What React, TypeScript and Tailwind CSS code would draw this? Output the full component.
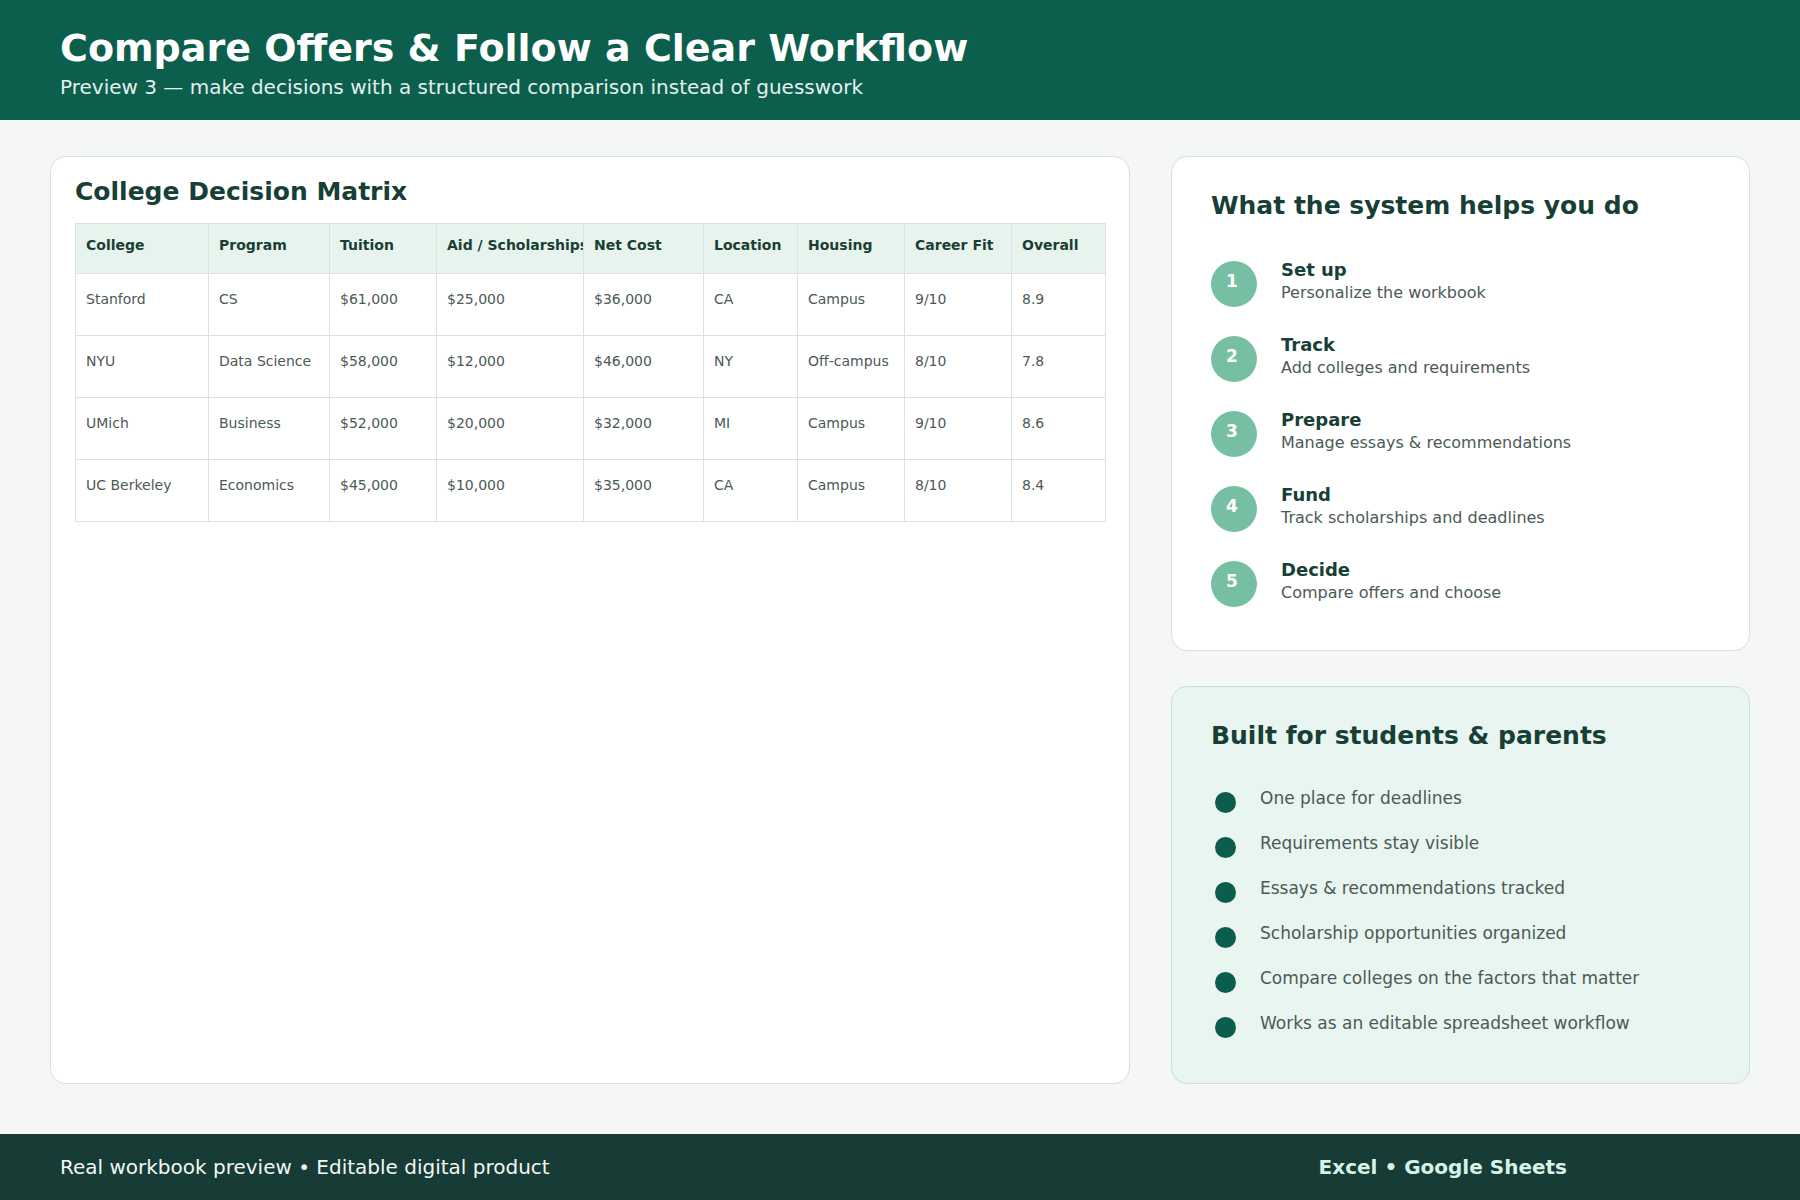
import React from 'react';

const columns = [
  { label: 'College', width: 133 },
  { label: 'Program', width: 121 },
  { label: 'Tuition', width: 107 },
  { label: 'Aid / Scholarships', width: 147 },
  { label: 'Net Cost', width: 120 },
  { label: 'Location', width: 94 },
  { label: 'Housing', width: 107 },
  { label: 'Career Fit', width: 107 },
  { label: 'Overall', width: 94 },
];

const rows = [
  ['Stanford', 'CS', '$61,000', '$25,000', '$36,000', 'CA', 'Campus', '9/10', '8.9'],
  ['NYU', 'Data Science', '$58,000', '$12,000', '$46,000', 'NY', 'Off-campus', '8/10', '7.8'],
  ['UMich', 'Business', '$52,000', '$20,000', '$32,000', 'MI', 'Campus', '9/10', '8.6'],
  ['UC Berkeley', 'Economics', '$45,000', '$10,000', '$35,000', 'CA', 'Campus', '8/10', '8.4'],
];

const steps = [
  { title: 'Set up', text: 'Personalize the workbook' },
  { title: 'Track', text: 'Add colleges and requirements' },
  { title: 'Prepare', text: 'Manage essays & recommendations' },
  { title: 'Fund', text: 'Track scholarships and deadlines' },
  { title: 'Decide', text: 'Compare offers and choose' },
];

const perks = [
  'One place for deadlines',
  'Requirements stay visible',
  'Essays & recommendations tracked',
  'Scholarship opportunities organized',
  'Compare colleges on the factors that matter',
  'Works as an editable spreadsheet workflow',
];

const DecisionMatrix: React.FC = () => (
  <div className="rounded-[16px] border border-[#d6e0dc] bg-white px-[24px] pt-[20px]">
    <h2 className="text-[25px] leading-[30px] font-bold text-[#173f35]">College Decision Matrix</h2>
    {/* header cells clip long labels, like the sheet export does */}
    <table className="mt-[16px] w-[1030px] table-fixed border-collapse">
      <colgroup>
        {columns.map((col) => (
          <col key={col.label} style={{ width: col.width }} />
        ))}
      </colgroup>
      <thead>
        <tr className="h-[50px] bg-[#e7f4ee]">
          {columns.map((col) => (
            <th
              key={col.label}
              className="overflow-hidden whitespace-nowrap border border-[#d9e3e0] px-[10px] pt-[11px] align-top text-left text-[14px] leading-[20px] font-bold text-[#1c3d33]"
            >
              {col.label}
            </th>
          ))}
        </tr>
      </thead>
      <tbody>
        {rows.map((row) => (
          <tr key={row[0]} className="h-[62px]">
            {row.map((cell, i) => (
              <td
                key={i}
                className="whitespace-nowrap border border-[#d9e3e0] px-[10px] pt-[15px] align-top text-[14px] leading-[20px] text-[#4b5a55]"
              >
                {cell}
              </td>
            ))}
          </tr>
        ))}
      </tbody>
    </table>
  </div>
);

const Workflow: React.FC = () => (
  <div className="rounded-[16px] border border-[#d6e0dc] bg-white px-[39px] pt-[34px] pb-[43px]">
    <h2 className="text-[25px] leading-[30px] font-bold text-[#173f35]">What the system helps you do</h2>
    <ol className="mt-[40px] flex flex-col gap-[29px]">
      {steps.map((step, i) => (
        <li key={step.title} className="flex items-start gap-[24px]">
          <span className="flex h-[46px] w-[46px] shrink-0 items-center justify-center rounded-full bg-[#77bfa3] pr-[4px] pb-[5px] text-[17px] font-bold text-white">
            {i + 1}
          </span>
          <div className="-mt-[3px]">
            <div className="text-[18px] leading-[24px] font-bold text-[#173f35]">{step.title}</div>
            <div className="text-[16px] leading-[22px] text-[#4b5a55]">{step.text}</div>
          </div>
        </li>
      ))}
    </ol>
  </div>
);

const Audience: React.FC = () => (
  <div className="flex-1 rounded-[16px] border border-[#c6e2d8] bg-[#e8f5f0] px-[39px] pt-[34px]">
    <h2 className="text-[25px] leading-[30px] font-bold text-[#173f35]">Built for students &amp; parents</h2>
    <ul className="mt-[35px] flex flex-col gap-[18px]">
      {perks.map((perk) => (
        <li key={perk} className="flex items-start gap-[24px]">
          <span className="mt-[6px] ml-[4px] h-[21px] w-[21px] shrink-0 rounded-full bg-[#0b5e4e]" />
          <span className="text-[17px] leading-[24px] text-[#4b5a55]">{perk}</span>
        </li>
      ))}
    </ul>
  </div>
);

export default function App() {
  return (
    <div className="flex h-[1200px] w-[1800px] flex-col bg-[#f5f7f6] font-['DejaVu_Sans',sans-serif]">
      <header className="h-[120px] shrink-0 bg-[#0c5e4d] px-[60px] pt-[25px]">
        <h1 className="text-[38px] leading-[46px] font-bold text-white">Compare Offers &amp; Follow a Clear Workflow</h1>
        <p className="mt-[2px] text-[20px] leading-[28px] text-[#e3f1ec]">
          Preview 3 — make decisions with a structured comparison instead of guesswork
        </p>
      </header>

      <main className="grid flex-1 grid-cols-[1080px_579px] gap-[41px] px-[50px] pt-[36px] pb-[50px]">
        <DecisionMatrix />
        <div className="flex flex-col gap-[35px]">
          <Workflow />
          <Audience />
        </div>
      </main>

      <footer className="flex h-[66px] shrink-0 items-center justify-between bg-[#173b35] pl-[60px] pr-[233px] text-[20px]">
        <span className="text-[#f2f7f5]">Real workbook preview • Editable digital product</span>
        <span className="font-bold text-[#d7f2e6]">Excel • Google Sheets</span>
      </footer>
    </div>
  );
}
